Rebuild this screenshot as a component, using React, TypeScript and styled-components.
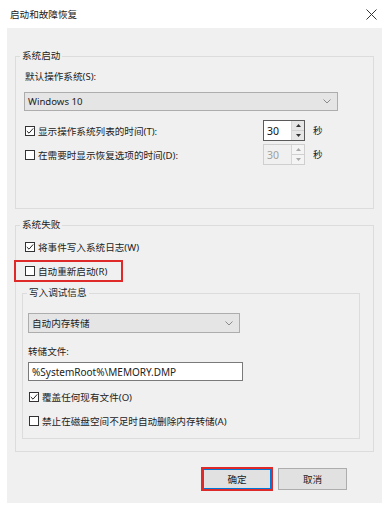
import React from "react";
import styled, { createGlobalStyle } from "styled-components";

const GlobalStyle = createGlobalStyle`
  html, body {
    margin: 0;
    padding: 0;
    background: #ffffff;
  }
  body {
    font-family: "Noto Sans", "Noto Sans CJK SC", sans-serif;
    font-size: 9.6px;
    color: #222;
  }
  * {
    box-sizing: border-box;
  }
`;

const Window = styled.div`
  width: 384px;
  height: 506px;
  background: #ffffff;
  display: flex;
  flex-direction: column;
`;

const TitleBar = styled.div`
  height: 29px;
  display: flex;
  align-items: center;
  justify-content: space-between;
  padding: 0 7px 0 10px;
  color: #222;
`;

const Panel = styled.div`
  margin: 0 2px 3px 7px;
  background: #f0f0f0;
  padding: 21px 8px 12px 8px;
  display: flex;
  flex-direction: column;
`;

type GroupProps = {
  $padLeft: number;
  $padBottom: number;
  $padTop: number;
  $marginTop?: number;
  $marginRight?: number;
};

const GroupBox = styled.fieldset<GroupProps>`
  margin: ${p => p.$marginTop || 0}px ${p => p.$marginRight || 0}px 0 0;
  padding: ${p => p.$padTop}px 0 ${p => p.$padBottom}px ${p => p.$padLeft}px;
  border: 1px solid #dcdcdc;
  min-width: 0;
  display: flex;
  flex-direction: column;
`;

const Legend = styled.legend<{ $offset: number }>`
  padding: 0 2px;
  margin-left: ${p => p.$offset}px;
  line-height: 14px;
  height: 14px;
  color: #222;
`;

const Label = styled.div<{ $top?: number }>`
  line-height: 14px;
  height: 14px;
  margin-top: ${p => p.$top || 0}px;
`;

const Select = styled.div<{ $width: number; $height: number; $top: number; $left?: number }>`
  width: ${p => p.$width}px;
  height: ${p => p.$height}px;
  margin-top: ${p => p.$top}px;
  margin-left: ${p => p.$left || 0}px;
  background: #e5e5e5;
  border: 1px solid #adadad;
  display: flex;
  align-items: center;
  justify-content: space-between;
  padding: 0 6px 0 3px;
`;

const Chevron = () => (
  <svg width="8" height="5" viewBox="0 0 8 5">
    <polyline points="0.5,0.5 4,4 7.5,0.5" fill="none" stroke="#8a8a8a" strokeWidth="1" />
  </svg>
);

const TimeRow = styled.div<{ $top: number }>`
  display: grid;
  grid-template-columns: 230px 42px auto;
  column-gap: 8px;
  align-items: center;
  height: 21px;
  margin-top: ${p => p.$top}px;
`;

const CheckRow = styled.div<{ $top?: number; $left?: number }>`
  display: flex;
  align-items: center;
  gap: 3px;
  height: 16px;
  margin-top: ${p => p.$top || 0}px;
  margin-left: ${p => p.$left || 0}px;
  white-space: nowrap;
`;

const Box = styled.span`
  width: 10px;
  height: 10px;
  border: 1px solid #333;
  background: #fff;
  display: inline-flex;
  align-items: center;
  justify-content: center;
  flex: none;
`;

const CheckBox = ({ checked }: { checked?: boolean }) => (
  <Box>
    {checked && (
      <svg width="8" height="8" viewBox="0 0 8 8">
        <polyline points="0.8,4 3,6.2 7.2,1.4" fill="none" stroke="#222" strokeWidth="1" />
      </svg>
    )}
  </Box>
);

const Spinner = styled.div<{ $disabled?: boolean }>`
  width: 42px;
  height: 21px;
  border: 1px solid ${p => (p.$disabled ? "#cfcfcf" : "#5a5a5a")};
  background: ${p => (p.$disabled ? "#f0f0f0" : "#ffffff")};
  color: ${p => (p.$disabled ? "#a0a0a0" : "#111")};
  display: flex;
  align-items: center;
  justify-content: space-between;
  padding-left: 3px;
  font-size: 10.5px;
`;

const SpinButtons = styled.div`
  width: 13px;
  height: 100%;
  display: flex;
  flex-direction: column;
  border-left: 1px solid #d6d6d6;
`;

const SpinHalf = styled.div<{ $disabled?: boolean }>`
  flex: 1;
  display: flex;
  align-items: center;
  justify-content: center;
  background: ${p => (p.$disabled ? "#f4f4f4" : "#e6e6e6")};
  & + & {
    border-top: 1px solid #d0d0d0;
  }
`;

const Arrow = ({ up, disabled }: { up?: boolean; disabled?: boolean }) => (
  <svg width="5" height="3" viewBox="0 0 5 3">
    <polygon
      points={up ? "0,3 2.5,0 5,3" : "0,0 2.5,3 5,0"}
      fill={disabled ? "#a8a8a8" : "#333"}
    />
  </svg>
);

const TimeSpinner = ({ disabled }: { disabled?: boolean }) => (
  <Spinner $disabled={disabled}>
    <span>30</span>
    <SpinButtons>
      <SpinHalf $disabled={disabled}>
        <Arrow up disabled={disabled} />
      </SpinHalf>
      <SpinHalf $disabled={disabled}>
        <Arrow disabled={disabled} />
      </SpinHalf>
    </SpinButtons>
  </Spinner>
);

const RedFrame = styled.div<{ $top: number }>`
  width: 109px;
  height: 22px;
  margin: ${p => p.$top}px 0 0 -8px;
  border: 2px solid #df2a2a;
  display: flex;
  align-items: center;
  padding-left: 9px;
`;

const TextField = styled.div`
  width: 215px;
  height: 19px;
  margin-top: 3px;
  background: #fff;
  border: 1px solid #7a7a7a;
  display: flex;
  align-items: center;
  padding-left: 3px;
  font-size: 10px;
`;

const ButtonRow = styled.div`
  display: flex;
  justify-content: flex-end;
  align-items: center;
  gap: 5px;
  margin: 15px 27px 0 0;
`;

const DefaultFrame = styled.div`
  border: 2px solid #df2a2a;
  display: flex;
`;

const Button = styled.button<{ $primary?: boolean }>`
  width: ${p => (p.$primary ? 68 : 69)}px;
  height: ${p => (p.$primary ? 20 : 22)}px;
  background: #e1e1e1;
  border: 1px solid ${p => (p.$primary ? "#0078d7" : "#adadad")};
  font-family: inherit;
  font-size: 9.6px;
  color: #222;
  padding: 0;
`;

const CloseIcon = () => (
  <svg width="11" height="11" viewBox="0 0 11 11">
    <line x1="0.5" y1="0.5" x2="10.5" y2="10.5" stroke="#333" strokeWidth="1" />
    <line x1="10.5" y1="0.5" x2="0.5" y2="10.5" stroke="#333" strokeWidth="1" />
  </svg>
);

const Seconds = styled.span`
  line-height: 14px;
`;

export default function App() {
  return (
    <>
      <GlobalStyle />
      <Window>
        <TitleBar>
          <span>启动和故障恢复</span>
          <CloseIcon />
        </TitleBar>
        <Panel>
          <GroupBox $padLeft={9} $padTop={7} $padBottom={43}>
            <Legend $offset={-5}>系统启动</Legend>
            <Label>默认操作系统(S):</Label>
            <Select $width={314} $height={19} $top={8} $left={-1}>
              <span>Windows 10</span>
              <Chevron />
            </Select>
            <TimeRow $top={9}>
              <CheckRow>
                <CheckBox checked />
                <span>显示操作系统列表的时间(T):</span>
              </CheckRow>
              <TimeSpinner />
              <Seconds>秒</Seconds>
            </TimeRow>
            <TimeRow $top={3}>
              <CheckRow>
                <CheckBox />
                <span>在需要时显示恢复选项的时间(D):</span>
              </CheckRow>
              <TimeSpinner disabled />
              <Seconds>秒</Seconds>
            </TimeRow>
          </GroupBox>

          <GroupBox $padLeft={6} $padTop={7} $padBottom={12} $marginTop={9}>
            <Legend $offset={-2}>系统失败</Legend>
            <CheckRow $left={3}>
              <CheckBox checked />
              <span>将事件写入系统日志(W)</span>
            </CheckRow>
            <RedFrame $top={5}>
              <CheckRow>
                <CheckBox />
                <span>自动重新启动(R)</span>
              </CheckRow>
            </RedFrame>

            <GroupBox $padLeft={5} $padTop={13} $padBottom={9} $marginTop={4} $marginRight={13}>
              <Legend $offset={-1}>写入调试信息</Legend>
              <Select $width={212} $height={20} $top={0}>
                <span>自动内存转储</span>
                <Chevron />
              </Select>
              <Label $top={12}>转储文件:</Label>
              <TextField>%SystemRoot%\MEMORY.DMP</TextField>
              <CheckRow $top={8} $left={1}>
                <CheckBox checked />
                <span>覆盖任何现有文件(O)</span>
              </CheckRow>
              <CheckRow $top={8} $left={1}>
                <CheckBox />
                <span>禁止在磁盘空间不足时自动删除内存转储(A)</span>
              </CheckRow>
            </GroupBox>
          </GroupBox>

          <ButtonRow>
            <DefaultFrame>
              <Button $primary>确定</Button>
            </DefaultFrame>
            <Button>取消</Button>
          </ButtonRow>
        </Panel>
      </Window>
    </>
  );
}
